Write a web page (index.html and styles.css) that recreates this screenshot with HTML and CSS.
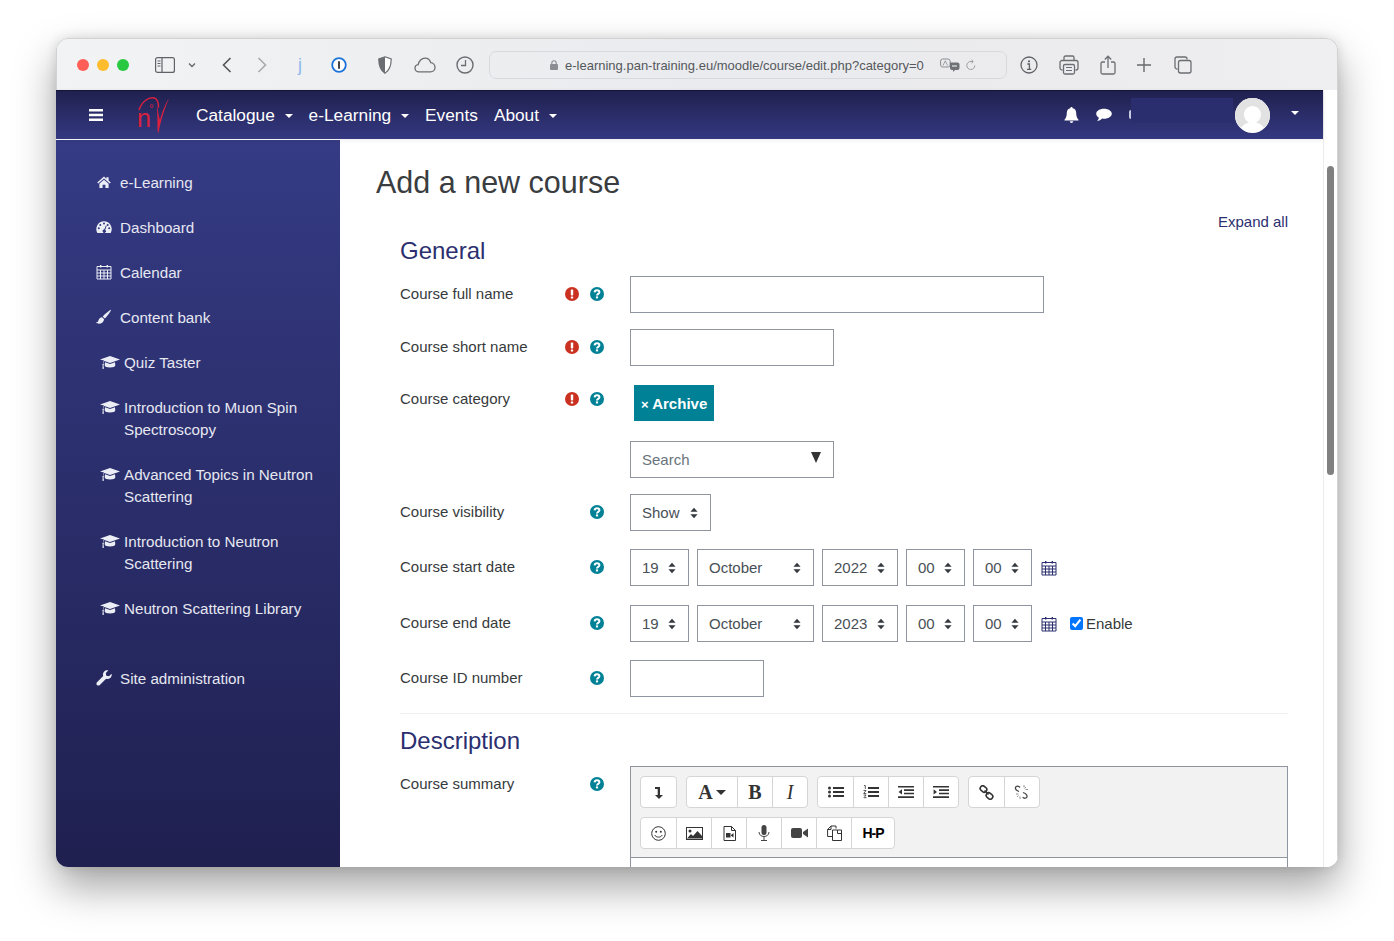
FILE: index.html
```html
<!DOCTYPE html>
<html lang="en">
	<head>
		<meta charset="UTF-8">
		<meta name="viewport" content="width=device-width, initial-scale=1.0">
		<title>Add a new course</title>
		<link rel="stylesheet" href="styles.css">
	</head>

	<body>
		<svg class="sprite" width="0" height="0">
			<symbol id="i-home" viewBox="0 0 16 16"><path d="M1.2 8.6 8 2.6l2.4 2.1V3.2h2.2v3.4l2.2 2-1 1L8 4.5 2.200 9.600zM3.400 9.700 8 5.800l4.600 3.900V14H9.400v-3.200H6.600V14H3.400z"/></symbol>
			<symbol id="i-gauge" viewBox="0 0 16 16"><path fill-rule="evenodd" d="M8 2.200A7.900 7.900 0 0 0 1.300 14h13.400A7.900 7.900 0 0 0 8 2.200zM8 3.600a1 1 0 1 1 0 2 1 1 0 0 1 0-2zM4.300 5a1 1 0 1 1 0 2 1 1 0 0 1 0-2zM2.800 8.200a1 1 0 1 1 0 2 1 1 0 0 1 0-2zM13.200 8.200a1 1 0 1 1 0 2 1 1 0 0 1 0-2zM11.700 5a1 1 0 1 1 0 2 1 1 0 0 1 0-2zM9.900 6.400l.8.300-1.500 4.200a1.600 1.600 0 1 1-1-.3z"/></symbol>
			<symbol id="i-cal" viewBox="0 0 16 16"><path d="M4 1h1.400v2.400H4zM10.600 1H12v2.400h-1.400z"/><path fill="none" stroke="currentColor" stroke-width="1" d="M1 2.500h14v12.500H1zM1 6h14M1 9h14M1 12h14M4.500 6v9M8 6v9M11.500 6v9"/></symbol>
			<symbol id="i-brush" viewBox="0 0 16 16"><path d="M15 .8c.5.4-3.500 6.400-6.200 8.800L6.700 7.500C9.200 4.800 14.500.4 15 .8zM6.100 8.200l2 2c-.2 2.700-2.400 4.500-5.200 4.500-1.300 0-2.400-.4-2.900-1.200 1.400-.1 1.900-.6 2.400-2 .5-1.800 1.900-3.200 3.700-3.300z"/></symbol>
			<symbol id="i-cap" viewBox="0 0 20 16"><path d="M10 2 20 5.500 10 9 4.400 7c-.7.800-1 1.700-1.100 2.800.4.200.6.500.6.900 0 .3-.2.600-.4.800l.5 3.300H2.300l.5-3.300c-.300-.2-.5-.5-.5-.8 0-.4.200-.7.600-.9.100-1.300.5-2.300 1.100-3.200L0 5.500z"/><path d="M5 8.300 10 10l5-1.700.3 3c0 1.300-2.400 2.300-5.300 2.300s-5.300-1-5.300-2.300z"/></symbol>
			<symbol id="i-wrench" viewBox="0 0 16 16"><path d="M15.600 3.800c.4 1.600-.1 3.200-1.300 4.200-1.200 1-2.800 1.300-4.200.8L3.800 15c-.8.800-2 .8-2.800 0s-.8-2 0-2.800l6.200-6.300c-.5-1.400-.2-3 .8-4.200C9.200.5 10.800 0 12.300.4L9.800 3l.5 2.700 2.700.6z"/></symbol>
			<symbol id="i-help" viewBox="0 0 14 14"><circle cx="7" cy="7" r="7" fill="#008196"/><path fill="none" stroke="#fff" stroke-width="2" d="M4.600 5.400C4.700 4 5.700 3.300 7 3.300c1.400 0 2.400.8 2.400 1.900 0 1.700-2.400 1.700-2.400 3.300"/><rect x="5.900" y="9.400" width="2.200" height="2" fill="#fff"/></symbol>
			<symbol id="i-req" viewBox="0 0 14 14"><circle cx="7" cy="7" r="7" fill="#ca3120"/><rect x="5.800" y="2.600" width="2.400" height="5.800" rx=".6" fill="#fff"/><rect x="5.800" y="9.400" width="2.400" height="2.200" rx=".5" fill="#fff"/></symbol>
			<symbol id="i-updown" viewBox="0 0 8 12"><path d="M4 .8 7.600 4.800H.4zM4 11.200.4 7.200h7.200z"/></symbol>
		</svg>

		<div class="window">
			<header class="browser-bar">
				<span class="light light-red"></span>
				<span class="light light-yellow"></span>
				<span class="light light-green"></span>

				<svg class="tb tb-sidebar" width="20" height="16" viewBox="0 0 20 16"><rect x=".6" y=".6" width="18.800" height="14.800" rx="2" fill="none" stroke="#5f6368" stroke-width="1.200"/><path d="M7 1v14" stroke="#5f6368" stroke-width="1.200"/><path d="M2.500 4h3M2.500 6.500h3M2.500 9h3" stroke="#5f6368"/></svg>
				<svg class="tb tb-chev" width="8" height="6" viewBox="0 0 8 6"><path d="M1 1.500 4 4.500 7 1.500" fill="none" stroke="#666" stroke-width="1.300"/></svg>
				<svg class="tb tb-back" width="10" height="16" viewBox="0 0 10 16"><path d="M8.500 1 1.500 8l7 7" fill="none" stroke="#555" stroke-width="1.600"/></svg>
				<svg class="tb tb-fwd" width="10" height="16" viewBox="0 0 10 16"><path d="M1.500 1l7 7-7 7" fill="none" stroke="#aaa" stroke-width="1.600"/></svg>
				<span class="tb tb-j">j</span>
				<svg class="tb tb-pass" width="16" height="16" viewBox="0 0 16 16"><circle cx="8" cy="8" r="6.800" fill="#fff" stroke="#1a73d9" stroke-width="1.800"/><rect x="7" y="4" width="2" height="8" rx="1" fill="#444"/></svg>
				<svg class="tb tb-shield" width="14" height="18" viewBox="0 0 14 18"><path d="M7 .8 13.200 3c0 6.500-1 11-6.200 14.200C1.800 14 .8 9.500.8 3z" fill="#fff" stroke="#6b6e72" stroke-width="1.200"/><path d="M7 .8.800 3c0 6.500 1 11 6.200 14.200z" fill="#6b6e72"/></svg>
				<svg class="tb tb-cloud" width="22" height="16" viewBox="0 0 22 16"><path d="M5 14.800C2.600 14.800 1 13.300 1 11.200c0-1.900 1.400-3.300 3.200-3.500C4.800 4 7.700 1.200 11 1.200c2.800 0 5 1.900 5.700 4.500 2.500.2 4.300 2.300 4.300 4.700 0 2.500-1.900 4.400-4.500 4.400z" fill="none" stroke="#6b6e72" stroke-width="1.300"/></svg>
				<svg class="tb tb-clock" width="18" height="18" viewBox="0 0 18 18"><circle cx="9" cy="9" r="8" fill="none" stroke="#6b6e72" stroke-width="1.400"/><path d="M9.500 4v5.500H5" fill="none" stroke="#6b6e72" stroke-width="1.300"/></svg>

				<div class="address">
					<svg class="lock" width="8" height="10" viewBox="0 0 8 10"><rect y="4" width="8" height="6" rx="1" fill="#8a8d91"/><path d="M1.800 4.500V3a2.200 2.200 0 0 1 4.400 0v1.500" fill="none" stroke="#8a8d91" stroke-width="1.100"/></svg>
					<span class="url">e-learning.pan-training.eu/moodle/course/edit.php?category=0</span>
					<svg class="translate" width="20" height="14" viewBox="0 0 20 14"><rect x=".6" y="1" width="9.500" height="8" rx="2" fill="none" stroke="#8a8d91"/><path d="M3 7.500 5.300 2.800 7.600 7.500" fill="none" stroke="#8a8d91" stroke-width=".8"/><path d="M10 4.500h7.500a2 2 0 0 1 2 2V10a2 2 0 0 1-2 2h-2.500l-2 2v-2h-1a2 2 0 0 1-2-2z" fill="#6e7175"/><path d="M12 8h5" stroke="#fff"/></svg>
					<svg class="reload" width="10" height="12" viewBox="0 0 10 12"><path d="M8.800 6.500A4 4 0 1 1 5 2.500h2M5.500.8 7.300 2.500 5.500 4.200" fill="none" stroke="#9a9da1"/></svg>
				</div>

				<svg class="tb tb-info" width="18" height="18" viewBox="0 0 18 18"><circle cx="9" cy="9" r="8" fill="none" stroke="#606367" stroke-width="1.300"/><path d="M7.300 8h2.100v5M7 13.300h4.200" fill="none" stroke="#606367" stroke-width="1.300"/><circle cx="9" cy="5.300" r="1.100" fill="#606367"/></svg>
				<svg class="tb tb-print" width="20" height="20" viewBox="0 0 20 20"><path d="M5 6V2.500A1.500 1.500 0 0 1 6.500 1h7A1.500 1.500 0 0 1 15 2.500V6M3.500 15H3a2 2 0 0 1-2-2V7.500a2 2 0 0 1 2-2h14a2 2 0 0 1 2 2V13a2 2 0 0 1-2 2h-.5" fill="none" stroke="#6b6e72" stroke-width="1.300"/><rect x="4.500" y="9.500" width="11" height="9.500" rx="1.500" fill="#eceef1" stroke="#6b6e72" stroke-width="1.300"/><path d="M7 12.500h6M7 15.500h6" stroke="#6b6e72"/></svg>
				<svg class="tb tb-share" width="16" height="20" viewBox="0 0 16 20"><path d="M5 7H2.500A1.500 1.500 0 0 0 1 8.500v9A1.500 1.500 0 0 0 2.500 19h11a1.500 1.500 0 0 0 1.500-1.500v-9A1.500 1.500 0 0 0 13.500 7H11" fill="none" stroke="#6b6e72" stroke-width="1.300"/><path d="M8 13V1.500M4.800 4.500 8 1.200l3.200 3.300" fill="none" stroke="#6b6e72" stroke-width="1.300"/></svg>
				<svg class="tb tb-plus" width="14" height="14" viewBox="0 0 14 14"><path d="M7 0v14M0 7h14" stroke="#666a6e" stroke-width="1.400"/></svg>
				<svg class="tb tb-tabs" width="18" height="18" viewBox="0 0 18 18"><path d="M3.500 13H3a2 2 0 0 1-2-2V3a2 2 0 0 1 2-2h8a2 2 0 0 1 2 2v.6" fill="none" stroke="#6b6e72" stroke-width="1.300"/><rect x="4.500" y="4.500" width="12.500" height="12.500" rx="2" fill="none" stroke="#6b6e72" stroke-width="1.300"/></svg>
			</header>

			<div class="viewport">
				<div class="page">
					<nav class="navbar">
						<svg class="burger" width="14" height="12" viewBox="0 0 14 12"><path d="M0 0h14v2.500H0zM0 4.700h14v2.500H0zM0 9.400h14v2.500H0z"/></svg>

						<div class="logo">
							<span class="logo-n">n</span><span class="logo-deg">°</span>
							<svg class="logo-mark" width="34" height="38" viewBox="0 0 34 38"><path d="M1 14C4 5 11 1 16 2c3 .6 4.500 4 4.600 9.500" fill="none" stroke="#d9213f" stroke-width="1.500"/><path d="M19.500 11c.8 6 1.600 10.500 2.500 13 1.500-6 5-16 9-21.500-3 7-8 20-10.500 34.500-.8-.5-1-2-1-5 0-7-.200-14-.5-21z" fill="#d9213f"/></svg>
						</div>

						<a class="nav-link">Catalogue <i class="caret"></i></a>
						<a class="nav-link">e-Learning <i class="caret"></i></a>
						<a class="nav-link">Events</a>
						<a class="nav-link">About <i class="caret"></i></a>

						<div class="nav-right">
							<svg class="bell" width="15" height="16" viewBox="0 0 15 16"><path d="M7.500 0c.7 0 1.200.5 1.100 1.200 2.400.5 3.600 2.200 3.600 4.800 0 3.400.9 5 2.300 6.700v.8H.5v-.8C1.900 11 2.800 9.400 2.800 6c0-2.600 1.200-4.300 3.600-4.800C6.300.5 6.800 0 7.500 0zM5.800 14.300h3.400a1.700 1.700 0 0 1-3.400 0z"/></svg>
							<svg class="chat" width="16" height="14" viewBox="0 0 16 14"><path d="M8 .8c4.300 0 7.800 2.200 7.800 5s-3.500 5-7.800 5c-.7 0-1.300-.1-1.900-.2C4.800 12.200 3 13 1 13.200c1-1 1.700-2.200 1.800-3.500C1.200 8.700.2 7.300.2 5.800.2 3 3.700.8 8 .8z"/></svg>
							<span class="redacted-edge"></span>
							<span class="redacted"></span>
							<span class="avatar">
								<svg width="35" height="35" viewBox="0 0 35 35"><circle cx="17.500" cy="17.500" r="17.500" fill="#fff"/><path d="M0 17.500A17.500 17.500 0 0 1 35 17.500 17.500 17.500 0 0 1 29 30c-2-3.400-5-5-8-5.600 3.200-1.500 5-4.600 5-8 0-4.600-3.800-8.400-8.500-8.400S9 11.800 9 16.400c0 3.400 1.800 6.500 5 8-3 .6-6 2.200-8 5.600A17.500 17.500 0 0 1 0 17.500z" fill="#e2e2e2"/></svg>
							</span>
							<i class="caret caret-user"></i>
						</div>
					</nav>

					<div class="below-nav">
						<aside class="sidebar">
							<a class="side-item"><svg class="side-icon" width="16" height="16"><use href="#i-home"/></svg>e-Learning</a>
							<a class="side-item"><svg class="side-icon" width="16" height="16"><use href="#i-gauge"/></svg>Dashboard</a>
							<a class="side-item"><svg class="side-icon" width="16" height="16"><use href="#i-cal"/></svg>Calendar</a>
							<a class="side-item"><svg class="side-icon" width="16" height="16"><use href="#i-brush"/></svg>Content bank</a>
							<a class="side-item side-course"><svg class="side-icon" width="20" height="16"><use href="#i-cap"/></svg>Quiz Taster</a>
							<a class="side-item side-course"><svg class="side-icon" width="20" height="16"><use href="#i-cap"/></svg>Introduction to Muon Spin Spectroscopy</a>
							<a class="side-item side-course"><svg class="side-icon" width="20" height="16"><use href="#i-cap"/></svg>Advanced Topics in Neutron Scattering</a>
							<a class="side-item side-course"><svg class="side-icon" width="20" height="16"><use href="#i-cap"/></svg>Introduction to Neutron Scattering</a>
							<a class="side-item side-course"><svg class="side-icon" width="20" height="16"><use href="#i-cap"/></svg>Neutron Scattering Library</a>
							<a class="side-item side-admin"><svg class="side-icon" width="16" height="16"><use href="#i-wrench"/></svg>Site administration</a>
						</aside>

						<main class="content">
							<h1 class="page-title">Add a new course</h1>
							<a class="expand-all">Expand all</a>

							<h2 class="section-title">General</h2>

							<div class="row">
								<label class="row-label">Course full name</label>
								<svg class="ic-req" width="14" height="14"><use href="#i-req"/></svg>
								<svg class="ic-help" width="14" height="14"><use href="#i-help"/></svg>
								<div class="row-field"><input class="text-input w-full" type="text"></div>
							</div>

							<div class="row">
								<label class="row-label">Course short name</label>
								<svg class="ic-req" width="14" height="14"><use href="#i-req"/></svg>
								<svg class="ic-help" width="14" height="14"><use href="#i-help"/></svg>
								<div class="row-field"><input class="text-input w-short" type="text"></div>
							</div>

							<div class="row row-cat">
								<label class="row-label">Course category</label>
								<svg class="ic-req" width="14" height="14"><use href="#i-req"/></svg>
								<svg class="ic-help" width="14" height="14"><use href="#i-help"/></svg>
								<div class="row-field row-field-stack">
									<span class="tag"><small>×</small> Archive</span>
									<div class="search-box">Search<i class="search-arrow"></i></div>
								</div>
							</div>

							<div class="row">
								<label class="row-label">Course visibility</label>
								<svg class="ic-help" width="14" height="14"><use href="#i-help"/></svg>
								<div class="row-field">
									<div class="select w-show">Show<svg width="8" height="12"><use href="#i-updown"/></svg></div>
								</div>
							</div>

							<div class="row row-date">
								<label class="row-label">Course start date</label>
								<svg class="ic-help" width="14" height="14"><use href="#i-help"/></svg>
								<div class="row-field date-field">
									<div class="select w-two">19<svg width="8" height="12"><use href="#i-updown"/></svg></div>
									<div class="select w-month">October<svg width="8" height="12"><use href="#i-updown"/></svg></div>
									<div class="select w-year">2022<svg width="8" height="12"><use href="#i-updown"/></svg></div>
									<div class="select w-two">00<svg width="8" height="12"><use href="#i-updown"/></svg></div>
									<div class="select w-two">00<svg width="8" height="12"><use href="#i-updown"/></svg></div>
									<svg class="date-cal" width="16" height="16"><use href="#i-cal"/></svg>
								</div>
							</div>

							<div class="row row-date">
								<label class="row-label">Course end date</label>
								<svg class="ic-help" width="14" height="14"><use href="#i-help"/></svg>
								<div class="row-field date-field">
									<div class="select w-two">19<svg width="8" height="12"><use href="#i-updown"/></svg></div>
									<div class="select w-month">October<svg width="8" height="12"><use href="#i-updown"/></svg></div>
									<div class="select w-year">2023<svg width="8" height="12"><use href="#i-updown"/></svg></div>
									<div class="select w-two">00<svg width="8" height="12"><use href="#i-updown"/></svg></div>
									<div class="select w-two">00<svg width="8" height="12"><use href="#i-updown"/></svg></div>
									<svg class="date-cal" width="16" height="16"><use href="#i-cal"/></svg>
									<label class="enable"><input type="checkbox" checked>Enable</label>
								</div>
							</div>

							<div class="row row-id">
								<label class="row-label">Course ID number</label>
								<svg class="ic-help" width="14" height="14"><use href="#i-help"/></svg>
								<div class="row-field"><input class="text-input w-id" type="text"></div>
							</div>

							<h2 class="section-title section-desc">Description</h2>

							<div class="row">
								<label class="row-label">Course summary</label>
								<svg class="ic-help" width="14" height="14"><use href="#i-help"/></svg>
								<div class="row-field">
									<div class="editor">
										<div class="editor-tools">
											<div class="ed-row">
												<div class="ed-group">
													<button class="ed-btn"><svg width="10" height="14" viewBox="0 0 10 14"><path d="M1 2h5v8h3l-4 4-4-4h2.700V4H1z" fill="#333"/></svg></button>
												</div>
												<div class="ed-group">
													<button class="ed-btn ed-font">A<i class="ed-caret"></i></button>
													<button class="ed-btn ed-bold">B</button>
													<button class="ed-btn ed-italic">I</button>
												</div>
												<div class="ed-group">
													<button class="ed-btn"><svg width="16" height="12" viewBox="0 0 16 12"><path d="M5 1h11v2H5zM5 5h11v2H5zM5 9h11v2H5z" fill="#333"/><circle cx="1.500" cy="2" r="1.500" fill="#333"/><circle cx="1.500" cy="6" r="1.500" fill="#333"/><circle cx="1.500" cy="10" r="1.500" fill="#333"/></svg></button>
													<button class="ed-btn"><svg width="16" height="14" viewBox="0 0 16 14"><path d="M5 2h11v2H5zM5 6h11v2H5zM5 10h11v2H5z" fill="#333"/><path d="M1 .5h1.300v3.500M.5 5.500h2.500L.7 8.500h2.600M.6 10h2.500L1.800 11.300 3.200 12.700H.6" fill="none" stroke="#333" stroke-width=".8"/></svg></button>
													<button class="ed-btn"><svg width="16" height="12" viewBox="0 0 16 12"><path d="M0 0h16v1.600H0zM6 3.300h10v1.600H6zM6 6.700h10v1.600H6zM0 10.200h16v1.800H0zM4 3.200v5.400L.6 6z" fill="#333"/></svg></button>
													<button class="ed-btn"><svg width="16" height="12" viewBox="0 0 16 12"><path d="M0 0h16v1.600H0zM6 3.300h10v1.600H6zM6 6.700h10v1.600H6zM0 10.200h16v1.800H0zM.6 3.200v5.400L4 6z" fill="#333"/></svg></button>
												</div>
												<div class="ed-group">
													<button class="ed-btn"><svg width="15" height="15" viewBox="0 0 15 15"><g fill="none" stroke="#333" stroke-width="1.600"><rect x="1" y="1.500" width="7" height="5" rx="2.500" transform="rotate(40 4.500 4)"/><rect x="7" y="8.500" width="7" height="5" rx="2.500" transform="rotate(40 10.500 11)"/><path d="M5.500 5.500l4 4"/></g></svg></button>
													<button class="ed-btn"><svg width="16" height="16" viewBox="0 0 16 16"><g fill="none" stroke="#444" stroke-width="1.300"><path d="M6 3.500C4.500 1.500 2 2 1.500 3.500 1 5 2.500 6.500 5 7.500"/><path d="M9 8.500c2.500 1 4.500 2.500 4 4.300-.5 1.700-3 2-4.300.3"/></g><path d="M10 1v2.500M12 3l-1.500 1.500M14 5.500h-2.500M2 10h2.500M3 13l1.500-1.500M6 15v-2.500" stroke="#777" stroke-width=".8"/></svg></button>
												</div>
											</div>
											<div class="ed-row">
												<div class="ed-group">
													<button class="ed-btn"><svg width="15" height="15" viewBox="0 0 15 15"><circle cx="7.500" cy="7.500" r="6.800" fill="none" stroke="#333"/><circle cx="5.200" cy="5.800" r="1" fill="#333"/><circle cx="9.800" cy="5.800" r="1" fill="#333"/><path d="M3.800 9c1 2.800 6.400 2.800 7.400 0" fill="none" stroke="#333"/></svg></button>
													<button class="ed-btn"><svg width="17" height="13" viewBox="0 0 17 13"><rect x=".5" y=".5" width="16" height="12" fill="none" stroke="#333"/><circle cx="4" cy="4" r="1.500" fill="#333"/><path d="M1 11.500 5 7l2 2 4.500-5 4.500 5v2.500z" fill="#333"/></svg></button>
													<button class="ed-btn"><svg width="13" height="15" viewBox="0 0 13 15"><path d="M1 .5h7.500l4 4V14.500H1z M8.500.5v4h4" fill="none" stroke="#333"/><path d="M3 7h4.500v4.500H3zM8 9l2.500-2v4.500L8 9.800z" fill="#333"/></svg></button>
													<button class="ed-btn"><svg width="12" height="16" viewBox="0 0 12 16"><rect x="3.500" y="0" width="5" height="10" rx="2.500" fill="#444"/><path d="M1 7c0 6 10 6 10 0M6 11.500V15M3 15.500h6" fill="none" stroke="#444"/></svg></button>
													<button class="ed-btn"><svg width="17" height="12" viewBox="0 0 17 12"><rect y="1" width="11" height="10" rx="2" fill="#444"/><path d="M12 5l5-3.500v9L12 7z" fill="#444"/></svg></button>
													<button class="ed-btn"><svg width="15" height="16" viewBox="0 0 15 16"><path d="M5 11.500H.6V4.500L4 1h5v2.500M4 1v3.500H.6" fill="none" stroke="#333"/><path d="M5.500 5h5l4 0v10.500H5.500z" fill="#fff" stroke="#333"/><path d="M10.500 5v3.500h4" fill="none" stroke="#333"/></svg></button>
													<button class="ed-btn ed-h5p">H-P</button>
												</div>
											</div>
										</div>
										<div class="editor-body"></div>
									</div>
								</div>
							</div>
						</main>
					</div>
				</div>

				<div class="scrollbar"><span class="thumb"></span></div>
			</div>
		</div>
	</body>
</html>
```

FILE: styles.css
```css
* {
	box-sizing: border-box;
}

html, body {
	height: 100%;
}

body {
	margin: 0;
	padding: 38px 56px 0;
	background: #fff;
	overflow: hidden;
	font-family: "Liberation Sans", Arial, sans-serif;
	font-size: 15px;
	color: #373a3c;
}

.sprite {
	position: absolute;
}

.window {
	width: 1282px;
	height: 829px;
	border-radius: 12px;
	overflow: hidden;
	display: flex;
	flex-direction: column;
	box-shadow: 0 20px 42px rgba(0, 0, 0, 0.36), 0 0 12px rgba(0, 0, 0, 0.12);
	background: #fff;
}

/* safari chrome */
.browser-bar {
	height: 52px;
	flex: none;
	display: flex;
	align-items: center;
	padding-left: 20px;
	padding-top: 1px;
	background: linear-gradient(90deg, #f1f3f4, #e9ebee 50%, #ecebee 80%, #efeff1);
	border: 1px solid #d2d2d2;
	border-bottom: 0;
	border-radius: 12px 12px 0 0;
}

.light {
	width: 12px;
	height: 12px;
	border-radius: 50%;
	margin-right: 8px;
}

.light-red { background: #ff5f57; }
.light-yellow { background: #febc2e; }
.light-green { background: #28c840; }

.tb {
	flex: none;
}

.tb-sidebar { margin-left: 18px; }
.tb-chev { margin-left: 13px; }
.tb-back { margin-left: 26px; }
.tb-fwd { margin-left: 25px; }
.tb-j {
	margin-left: 31px;
	color: #8fb8ea;
	font-size: 18px;
	width: 6px;
}
.tb-pass { margin-left: 27px; }
.tb-shield { margin-left: 31px; }
.tb-cloud { margin-left: 22px; }
.tb-clock { margin-left: 20px; }

.address {
	width: 518px;
	height: 28px;
	margin-left: 15px;
	margin-right: 13px;
	border: 1px solid #d7d9dc;
	border-radius: 7px;
	display: flex;
	align-items: center;
	padding-left: 60px;
	font-size: 13px;
	color: #55585c;
}

.lock { margin-right: 7px; }
.translate { margin-left: 16px; }
.reload { margin-left: 6px; }

.tb-print { margin-left: 21px; }
.tb-share { margin-left: 21px; }
.tb-plus { margin-left: 21px; }
.tb-tabs { margin-left: 23px; }

.viewport {
	flex: 1;
	display: flex;
	min-height: 0;
}

.page {
	width: 1267px;
	flex: none;
	display: flex;
	flex-direction: column;
}

.scrollbar {
	flex: 1;
	background: #fff;
	border-left: 1px solid #ececec;
	border-right: 1px solid #d2d2d2;
	padding: 76px 3px 0 3px;
}

.thumb {
	display: block;
	height: 309px;
	background: #808080;
	border-radius: 4px;
}

/* moodle navbar */
.navbar {
	height: 49px;
	flex: none;
	display: flex;
	align-items: center;
	background: linear-gradient(#20214f, #343981);
	border-top: 1px solid #14143a;
	color: #fff;
	padding-left: 33px;
	font-size: 17.300px;
	position: relative;
	z-index: 2;
	box-shadow: 0 1px 5px rgba(0, 0, 0, 0.08);
}

.burger {
	fill: #fff;
}

.logo {
	position: relative;
	width: 34px;
	height: 38px;
	margin-left: 35px;
	margin-right: 24px;
	color: #d9213f;
}

.logo-mark {
	position: absolute;
	left: 0;
	top: 0;
}

.logo-n {
	position: absolute;
	left: -1px;
	top: 8px;
	font-size: 25px;
	line-height: 28px;
	font-weight: 400;
}

.logo-deg {
	position: absolute;
	left: 11px;
	top: 6px;
	font-size: 12px;
}

.nav-link {
	margin-right: 16px;
	white-space: nowrap;
}

.caret {
	display: inline-block;
	width: 0;
	height: 0;
	border: 4px solid transparent;
	border-top-color: #fff;
	border-bottom: 0;
	margin-left: 5px;
	vertical-align: 3px;
}

.nav-right {
	margin-left: auto;
	display: flex;
	align-items: center;
	padding-right: 24px;
}

.bell { fill: #fff; }

.chat {
	fill: #fff;
	margin-left: 17px;
}

.redacted-edge {
	width: 2px;
	height: 9px;
	margin-left: 17px;
	margin-bottom: 2px;
	background: #c8cae0;
	border-radius: 2px 0 0 2px;
}

.redacted {
	width: 102px;
	height: 25px;
	margin-top: -9px;
	background: #2b2e6e;
}

.avatar {
	width: 35px;
	height: 35px;
	margin-left: 2px;
	display: block;
}

.caret-user {
	margin-left: 21px;
	vertical-align: baseline;
	margin-top: -4px;
}

.below-nav {
	flex: 1;
	display: flex;
	min-height: 0;
	overflow: hidden;
	padding-top: 1px;
}

/* left drawer */
.sidebar {
	width: 284px;
	flex: none;
	background: linear-gradient(#353b84, #1f2050);
	padding: 20px 20px 0 40px;
	color: #e6e7f1;
}

.side-item {
	display: block;
	line-height: 22px;
	padding: 11.500px 0 11.500px 24px;
	position: relative;
	font-size: 15.200px;
}

.side-icon {
	position: absolute;
	left: 0;
	top: 14px;
	fill: #eceef6;
	color: #eceef6;
}

.side-course {
	padding-left: 28px;
}

.side-course .side-icon {
	left: 4px;
}

.side-admin {
	margin-top: 25px;
}

/* main area */
.content {
	flex: 1;
	min-width: 0;
	padding: 0 35px 0 60px;
	position: relative;
}

.page-title {
	font-size: 30.500px;
	font-weight: 400;
	line-height: 36px;
	margin: 24px 0 0 -24px;
	color: #3a3d40;
}

.expand-all {
	display: block;
	text-align: right;
	color: #2b2f6f;
	line-height: 22px;
	margin-top: 11px;
}

.section-title {
	font-size: 24px;
	font-weight: 400;
	line-height: 30px;
	margin: 3px 0 10px;
	color: #2b2f6f;
}

.row {
	display: flex;
	align-items: flex-start;
	margin-bottom: 16px;
	position: relative;
}

.row-label {
	width: 190px;
	flex: none;
	line-height: 22px;
	padding-top: 7px;
	white-space: nowrap;
}

.ic-req,
.ic-help {
	position: absolute;
	top: 11px;
}

.ic-req { left: 165px; }
.ic-help { left: 190px; }

.row-field {
	margin-left: 40px;
	flex: 1;
	min-width: 0;
}

.row-field-stack {
	display: flex;
	flex-direction: column;
	align-items: flex-start;
}

.text-input {
	display: block;
	height: 37px;
	border: 1px solid #8f959e;
	background: #fff;
	border-radius: 0;
	padding: 0 12px;
}

.w-full { width: 414px; }
.w-short { width: 204px; }
.w-id { width: 134px; }

.row-cat .row-label { padding-top: 7px; }
.row-cat { margin-top: -1px; }

.tag {
	background: #008196;
	color: #fff;
	font-weight: 700;
	height: 36px;
	line-height: 37px;
	padding: 0 7px;
	margin: 4px 0 20px 4px;
}

.tag small {
	font-size: 13px;
}

.search-box {
	width: 204px;
	height: 37px;
	border: 1px solid #8f959e;
	padding: 0 12px 0 11px;
	line-height: 35px;
	color: #6a737b;
	display: flex;
	justify-content: space-between;
	align-items: center;
}

.search-arrow {
	width: 0;
	height: 0;
	border-left: 5.500px solid transparent;
	border-right: 5.500px solid transparent;
	border-top: 11px solid #333;
	margin-top: -4px;
}

.select {
	height: 37px;
	border: 1px solid #8f959e;
	padding: 0 12px 0 11px;
	color: #495057;
	display: flex;
	align-items: center;
	justify-content: space-between;
	flex: none;
}

.select svg {
	fill: #343a40;
}

.w-show { width: 81px; }
.w-two { width: 59px; }
.w-month { width: 117px; }
.w-year { width: 76px; }

.date-field {
	display: flex;
	gap: 8px;
	align-items: center;
}

.row-date {
	margin-top: 18px;
	margin-bottom: 0;
}

.row-date + .row-date {
	margin-top: 19px;
}

.date-cal {
	color: #2b2f6f;
	fill: #2b2f6f;
	margin-left: 1px;
}

.enable {
	display: flex;
	align-items: center;
	margin-left: 5px;
	white-space: nowrap;
}

.enable input {
	width: 13px;
	height: 13px;
	margin: 0 3px 0 0;
}

.row-id {
	margin-top: 18px;
	margin-bottom: 0;
	padding-bottom: 16px;
	border-bottom: 1px solid #eceef0;
}

.section-desc {
	margin: 12px 0 10px;
}

.editor {
	border: 1px solid #8f959e;
	background: #f2f2f2;
	margin-top: 0;
}

.editor-tools {
	padding: 9px 9px 8px;
	border-bottom: 1px solid #8f959e;
}

.ed-row {
	display: flex;
	gap: 9px;
}

.ed-row + .ed-row {
	margin-top: 9px;
}

.ed-group {
	display: flex;
	background: #fff;
	border: 1px solid #d5d5d5;
	border-radius: 4px;
}

.ed-btn {
	width: 35px;
	height: 30px;
	border: 0;
	border-left: 1px solid #d5d5d5;
	background: transparent;
	padding: 0;
	display: flex;
	align-items: center;
	justify-content: center;
	font-family: "Liberation Serif", serif;
	font-size: 20px;
	color: #333;
}

.ed-btn:first-child {
	border-left: 0;
}

.ed-font {
	width: 50px;
	font-weight: 700;
}

.ed-caret {
	width: 0;
	height: 0;
	border: 5px solid transparent;
	border-top-color: #333;
	border-bottom: 0;
	margin-left: 3px;
}

.ed-bold { font-weight: 700; }
.ed-italic { font-style: italic; }

.ed-h5p {
	width: 43px;
	font-family: "Liberation Sans", sans-serif;
	font-weight: 700;
	font-size: 14px;
	letter-spacing: -1px;
	color: #000;
}

.editor-body {
	height: 200px;
	background: #fff;
}
```
